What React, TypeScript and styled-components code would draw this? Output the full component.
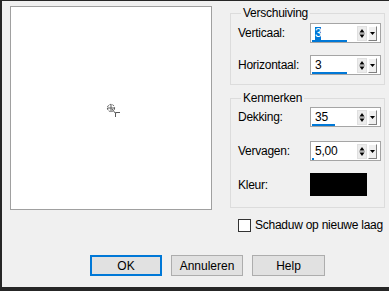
import React from 'react';
import styled, { createGlobalStyle } from 'styled-components';

const GlobalStyle = createGlobalStyle`
    html, body {
        margin: 0;
        padding: 0;
        background: #262626;
    }
    * {
        box-sizing: border-box;
    }
`;

const Window = styled.div`
    width: 389px;
    height: 291px;
    display: flex;
    flex-direction: column;
    background: #f0f0f0;
    border-top: 1px solid #262626;
    border-left: 2px solid #262626;
    border-bottom: 4px solid #262626;
    font-family: 'Liberation Sans', Arial, sans-serif;
    font-size: 12px;
    letter-spacing: -0.25px;
    color: #000;
`;

const Main = styled.div`
    display: flex;
    gap: 18px;
    padding: 5px 4px 0 8px;
`;

const Preview = styled.div`
    width: 202px;
    height: 204px;
    display: flex;
    align-items: center;
    justify-content: center;
    background: #fff;
    border: 1px solid #a0a0a0;
`;

const Side = styled.div`
    display: flex;
    flex-direction: column;
    width: 155px;
`;

const GroupBox = styled.fieldset<{ $top?: number }>`
    margin: ${({ $top = 0 }) => $top}px 0 0;
    padding: 0 3px 0 7px;
    min-width: 0;
    border: 1px solid #dcdcdc;
    display: flex;
    flex-direction: column;
`;

const Legend = styled.legend`
    padding: 0 2px;
    margin-left: 3px;
    line-height: 14px;
`;

const Rows = styled.div<{ $pt: number; $pb: number }>`
    display: flex;
    flex-direction: column;
    gap: 12px;
    padding: ${({ $pt }) => $pt}px 0 ${({ $pb }) => $pb}px;
`;

const Row = styled.div<{ $mt?: number }>`
    display: flex;
    align-items: center;
    margin-top: ${({ $mt = 0 }) => $mt}px;
`;

const Label = styled.span`
    width: 72px;
    flex-shrink: 0;
`;

const SpinBox = styled.div`
    width: 71px;
    height: 20px;
    display: flex;
    align-items: center;
    background: #fff;
    border: 1px solid #a5a5a5;
    padding-right: 3px;
`;

const ValueArea = styled.div`
    flex: 1;
    align-self: stretch;
    display: flex;
    flex-direction: column;
    justify-content: space-between;
    padding: 3px 0 0 1px;
`;

const ValueText = styled.span<{ $selected?: boolean }>`
    margin-left: 3px;
    line-height: 13px;
    align-self: flex-start;
    background: ${({ $selected }) => ($selected ? '#0078d7' : 'transparent')};
    color: ${({ $selected }) => ($selected ? '#fff' : '#000')};
`;

const Bar = styled.div`
    height: 3px;
    background: #0078d7;
`;

const UpDown = styled.div`
    width: 10px;
    height: 15px;
    display: flex;
    align-items: center;
    justify-content: center;
    background: #ececec;
    border: 1px solid #e0e0e0;
`;

const DropButton = styled.div`
    width: 9px;
    height: 15px;
    margin-left: 1px;
    display: flex;
    align-items: center;
    justify-content: center;
    background: #f0f0f0;
    border-top: 1px solid #fff;
    border-left: 1px solid #fff;
    border-right: 1px solid #808080;
    border-bottom: 1px solid #808080;
`;

const Swatch = styled.div`
    width: 57px;
    height: 23px;
    background: #000;
`;

const CheckRow = styled.label`
    display: flex;
    align-items: center;
    gap: 4px;
    margin: 10px 0 0 8px;
`;

const CheckBox = styled.span`
    width: 13px;
    height: 13px;
    background: #fff;
    border: 1px solid #333;
`;

const ButtonRow = styled.div`
    display: flex;
    gap: 9px;
    margin-top: auto;
    padding: 0 0 11px 88px;
`;

const Button = styled.button<{ $default?: boolean; $width?: number }>`
    width: ${({ $width = 72 }) => $width}px;
    height: 21px;
    padding: 0;
    font: inherit;
    color: #000;
    background: #e1e1e1;
    border: ${({ $default }) => ($default ? '2px solid #0078d7' : '1px solid #adadad')};
`;

const Spin: React.FC<{ value: string; fill: number; selected?: boolean }> = ({ value, fill, selected }) => (
    <SpinBox>
        <ValueArea>
            <ValueText $selected={selected}>{value}</ValueText>
            <Bar style={{ width: fill }} />
        </ValueArea>
        <UpDown>
            <svg width="6" height="11" viewBox="0 0 6 11">
                <path d="M3 1 L5.5 4.5 L0.5 4.5 Z" fill="#000" />
                <path d="M0 5.5 H6" stroke="#b0b0b0" strokeWidth="1" />
                <path d="M0.5 6.5 L5.5 6.5 L3 10 Z" fill="#000" />
            </svg>
        </UpDown>
        <DropButton>
            <svg width="5" height="3" viewBox="0 0 5 3">
                <path d="M0 0 H5 L2.5 3 Z" fill="#000" />
            </svg>
        </DropButton>
    </SpinBox>
);

const Cursor = () => (
    <svg width="24" height="24" viewBox="0 0 24 24" fill="none" stroke="#5a5a5a" strokeWidth="1">
        <circle cx="12" cy="12" r="3.6" strokeDasharray="2 1" />
        <path d="M12 8.5 V15.5 M8.5 12 H15.5" />
        <path d="M13 13 L17 18" />
        <path d="M16.5 16.5 H21 M16.5 16.5 V21" />
    </svg>
);

export default function App() {
    return (
        <>
            <GlobalStyle />
            <Window>
                <Main>
                    <Preview>
                        <Cursor />
                    </Preview>
                    <Side>
                        <GroupBox>
                            <Legend>Verschuiving</Legend>
                            <Rows $pt={3} $pb={9}>
                                <Row>
                                    <Label>Verticaal:</Label>
                                    <Spin value="3" fill={35} selected />
                                </Row>
                                <Row>
                                    <Label>Horizontaal:</Label>
                                    <Spin value="3" fill={35} />
                                </Row>
                            </Rows>
                        </GroupBox>
                        <GroupBox $top={6}>
                            <Legend>Kenmerken</Legend>
                            <Rows $pt={2} $pb={11}>
                                <Row>
                                    <Label>Dekking:</Label>
                                    <Spin value="35" fill={23} />
                                </Row>
                                <Row $mt={2}>
                                    <Label>Vervagen:</Label>
                                    <Spin value="5,00" fill={2} />
                                </Row>
                                <Row>
                                    <Label>Kleur:</Label>
                                    <Swatch />
                                </Row>
                            </Rows>
                        </GroupBox>
                        <CheckRow>
                            <CheckBox />
                            Schaduw op nieuwe laag
                        </CheckRow>
                    </Side>
                </Main>
                <ButtonRow>
                    <Button $default>OK</Button>
                    <Button>Annuleren</Button>
                    <Button $width={73}>Help</Button>
                </ButtonRow>
            </Window>
        </>
    );
}
